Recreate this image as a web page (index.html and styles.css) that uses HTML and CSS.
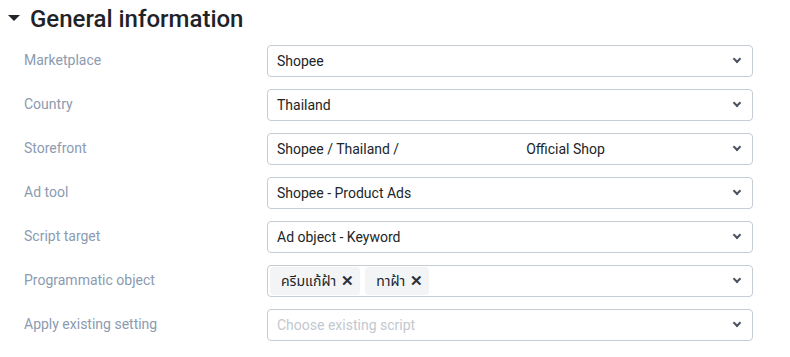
FILE: index.html
```html
<!DOCTYPE html>
<html lang="en">
<head>
    <meta charset="UTF-8">
    <title>General information</title>
    <link rel="stylesheet" href="styles.css">
</head>
<body>
    <section class="panel">
        <h2 class="panel-title"><span class="caret"></span>General information</h2>

        <div class="form-row">
            <label class="field-label">Marketplace</label>
            <div class="select-box"><span class="value">Shopee</span><span class="chevron"></span></div>
        </div>
        <div class="form-row">
            <label class="field-label">Country</label>
            <div class="select-box"><span class="value">Thailand</span><span class="chevron"></span></div>
        </div>
        <div class="form-row">
            <label class="field-label">Storefront</label>
            <div class="select-box"><span class="value">Shopee / Thailand / <span class="blank"></span>Official Shop</span><span class="chevron"></span></div>
        </div>
        <div class="form-row">
            <label class="field-label">Ad tool</label>
            <div class="select-box"><span class="value">Shopee - Product Ads</span><span class="chevron"></span></div>
        </div>
        <div class="form-row">
            <label class="field-label">Script target</label>
            <div class="select-box"><span class="value">Ad object - Keyword</span><span class="chevron"></span></div>
        </div>
        <div class="form-row">
            <label class="field-label">Programmatic object</label>
            <div class="select-box multi">
                <div class="tags">
                    <span class="tag">ครีมแก้ฝ้า <span class="remove">&#x2715;</span></span>
                    <span class="tag">ทาฝ้า <span class="remove">&#x2715;</span></span>
                </div>
                <span class="chevron"></span>
            </div>
        </div>
        <div class="form-row">
            <label class="field-label">Apply existing setting</label>
            <div class="select-box"><span class="value placeholder">Choose existing script</span><span class="chevron"></span></div>
        </div>
    </section>
</body>
</html>
```

FILE: styles.css
```css
* {
    box-sizing: border-box;
    margin: 0;
    padding: 0;
}

body {
    font-family: Roboto, "Noto Sans", "Noto Sans Thai", sans-serif;
    background-color: #fff;
    color: #212529;
    width: 790px;
    height: 357px;
    overflow: hidden;
}

.panel {
    padding: 4px 37px 0 8px;
}

.panel-title {
    display: flex;
    align-items: center;
    font-size: 24px;
    font-weight: 500;
    color: #1f2328;
    height: 30px;
    margin-bottom: 11px;
}

.caret {
    width: 0;
    height: 0;
    border-left: 6px solid transparent;
    border-right: 6px solid transparent;
    border-top: 6px solid #212529;
    margin-right: 10px;
    margin-top: -2px;
}

.form-row {
    display: flex;
    align-items: center;
    height: 32px;
    margin-bottom: 12px;
}

.field-label {
    width: 259px;
    padding-left: 16px;
    font-size: 14px;
    color: #8b9bb0;
    margin-top: -2px;
}

.select-box {
    flex: 1;
    height: 32px;
    border: 1px solid #c6ccd3;
    border-radius: 4px;
    display: flex;
    align-items: center;
    justify-content: space-between;
    padding: 0 10px 0 9px;
    font-size: 14px;
}

.value {
    display: flex;
    align-items: center;
    white-space: nowrap;
}

.blank {
    display: inline-block;
    width: 127px;
}

.placeholder {
    color: #c3c8cf;
}

.chevron {
    width: 6px;
    height: 6px;
    border-right: 2px solid #4a5360;
    border-bottom: 2px solid #4a5360;
    transform: rotate(45deg);
    margin-top: -4px;
    margin-right: 2px;
}

.select-box.multi {
    padding-left: 2px;
}

.tags {
    display: flex;
    gap: 5px;
}

.tag {
    background-color: #f2f4f6;
    border-radius: 4px;
    height: 28px;
    display: flex;
    align-items: center;
    padding: 0 6px 0 11px;
    font-size: 14px;
    gap: 5px;
}

.remove {
    font-weight: 700;
    font-size: 15px;
    color: #2b3038;
}
```
